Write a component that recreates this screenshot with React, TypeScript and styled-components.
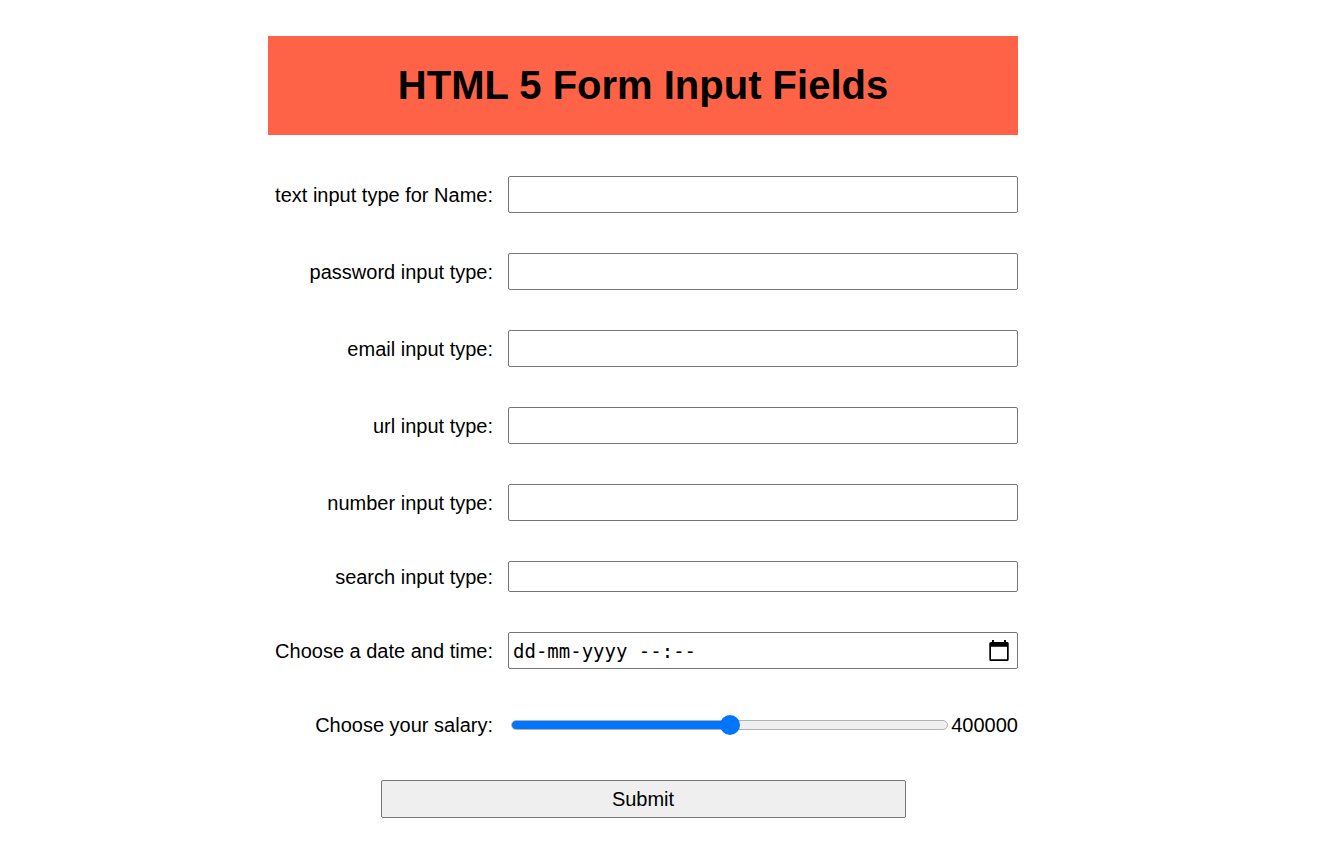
import React, { useState } from "react";
import styled, { createGlobalStyle } from "styled-components";

const GlobalStyle = createGlobalStyle`
  *, *::before, *::after {
    box-sizing: border-box;
  }
  body {
    margin: 0;
    background: #fff;
    color: #000;
    font-family: "Liberation Sans", Arial, sans-serif;
    font-size: 20px;
    line-height: 24px;
  }
`;

const Page = styled.main`
  display: flex;
  justify-content: center;
  padding: 36px 44px 40px 0;
`;

const Form = styled.form`
  width: 100%;
  max-width: 750px;
`;

const Title = styled.h1`
  margin: 0 0 41px;
  padding: 27px 0;
  background: tomato;
  font-size: 40px;
  line-height: 45px;
  text-align: center;
`;

const Fields = styled.div`
  display: flex;
  flex-direction: column;
  gap: 40px;
`;

const Row = styled.div`
  display: grid;
  grid-template-columns: 30% 68%;
  column-gap: 2%;
  align-items: center;
`;

const Label = styled.label`
  text-align: right;
`;

const TextInput = styled.input<{ $compact?: boolean }>`
  appearance: none;
  width: 100%;
  height: ${(p) => (p.$compact ? "31px" : "37px")};
  margin: 0;
  padding: 2px 3px;
  border: 1px solid #767676;
  border-radius: 2px;
  background: #fff;
  color: #000;
  font: inherit;
`;

const DateBox = styled.div`
  display: flex;
  align-items: center;
  height: 37px;
  padding: 0 8px 0 4px;
  border: 1px solid #767676;
  border-radius: 2px;
`;

const DateInput = styled.input`
  flex: 1;
  min-width: 0;
  padding: 0;
  border: 0;
  outline: 0;
  background: transparent;
  color: #000;
  font-family: "DejaVu Sans Mono", monospace;
  font-size: 19px;
  &::placeholder {
    color: #000;
    opacity: 1;
  }
`;

const PickerButton = styled.button`
  display: flex;
  padding: 0;
  border: 0;
  background: none;
  color: #000;
`;

const SliderGroup = styled.div`
  display: flex;
  align-items: center;
  gap: 3px;
  height: 31px;
  padding-left: 3px;
`;

const Slider = styled.input`
  appearance: none;
  flex: 1;
  min-width: 0;
  height: 20px;
  margin: 0;
  background: transparent;
  &::-webkit-slider-runnable-track {
    height: 10px;
    border: 1px solid #b2b2b2;
    border-radius: 5px;
    background: linear-gradient(
      to right,
      #0075ff var(--fill),
      #efefef var(--fill)
    );
    background-origin: border-box;
  }
  &::-webkit-slider-thumb {
    appearance: none;
    width: 20px;
    height: 20px;
    margin-top: -6px;
    border-radius: 50%;
    background: #0075ff;
  }
`;

const Submit = styled.button`
  align-self: center;
  width: 70%;
  height: 38px;
  padding: 0;
  border: 1px solid #767676;
  border-radius: 2px;
  background: #efefef;
  color: #000;
  font: inherit;
`;

const CalendarIcon = () => (
  <svg width="20" height="22" viewBox="0 0 20 22" aria-hidden="true">
    <path
      fill="currentColor"
      fillRule="evenodd"
      d="M3 0h2v2h10V0h2v2h1.500Q19.700 2 19.700 3.500V19.500Q19.700 21 18.200 21H1.800Q.3 21 .3 19.500V3.500Q.3 2 1.800 2H3ZM2 6.700V19.300H18V6.700Z"
    />
  </svg>
);

const fields = [
  { id: "name", type: "text", label: "text input type for Name:" },
  { id: "password", type: "password", label: "password input type:" },
  { id: "email", type: "email", label: "email input type:" },
  { id: "url", type: "url", label: "url input type:" },
  { id: "number", type: "number", label: "number input type:" },
  { id: "search", type: "search", label: "search input type:", compact: true },
];

const MAX_SALARY = 800000;

export default function App() {
  const [salary, setSalary] = useState(400000);
  const fill = { "--fill": `${(salary / MAX_SALARY) * 100}%` } as React.CSSProperties;

  return (
    <Page>
      <GlobalStyle />
      <Form onSubmit={(e) => e.preventDefault()}>
        <Title>HTML 5 Form Input Fields</Title>
        <Fields>
          {fields.map((f) => (
            <Row key={f.id}>
              <Label htmlFor={f.id}>{f.label}</Label>
              <TextInput id={f.id} name={f.id} type={f.type} $compact={f.compact} />
            </Row>
          ))}
          <Row>
            <Label htmlFor="datetime">Choose a date and time:</Label>
            <DateBox>
              <DateInput id="datetime" name="datetime" type="text" placeholder="dd-mm-yyyy --:--" />
              <PickerButton type="button" aria-label="Open calendar">
                <CalendarIcon />
              </PickerButton>
            </DateBox>
          </Row>
          <Row>
            <Label htmlFor="salary">Choose your salary:</Label>
            <SliderGroup>
              <Slider
                id="salary"
                name="salary"
                type="range"
                min={0}
                max={MAX_SALARY}
                step={1000}
                value={salary}
                style={fill}
                onChange={(e) => setSalary(Number(e.target.value))}
              />
              <output htmlFor="salary">{salary}</output>
            </SliderGroup>
          </Row>
          <Submit type="submit">Submit</Submit>
        </Fields>
      </Form>
    </Page>
  );
}
